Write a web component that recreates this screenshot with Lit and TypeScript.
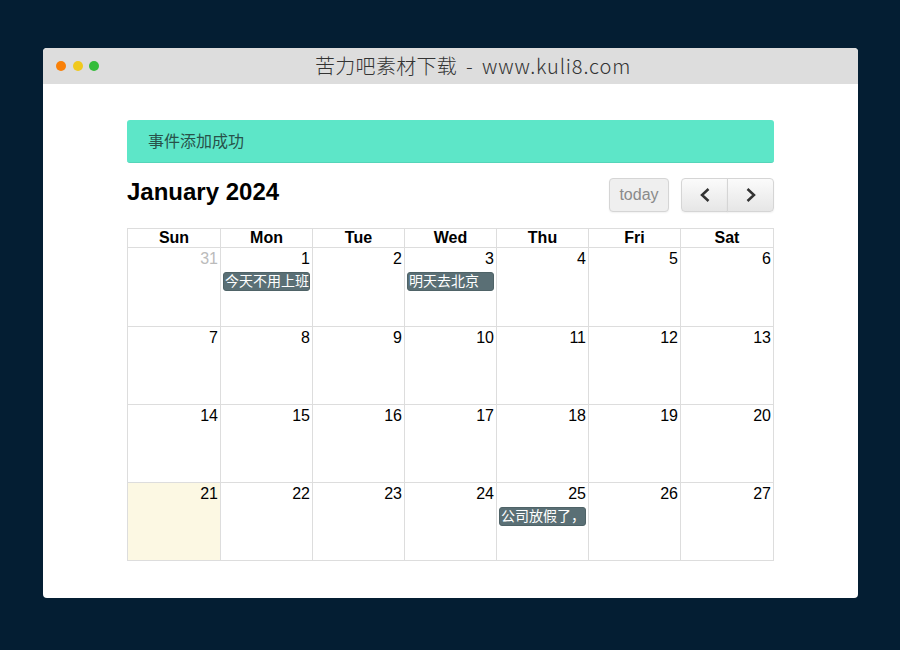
import { LitElement, html, css } from 'lit';
import { customElement } from 'lit/decorators.js';

type Day = { n: number; muted?: boolean; current?: boolean; event?: string };

const weekdays = ['Sun', 'Mon', 'Tue', 'Wed', 'Thu', 'Fri', 'Sat'];
const colWidths = [93, 92, 92, 92, 92, 92, 93];

const weeks: Day[][] = [
  [{ n: 31, muted: true }, { n: 1, event: '今天不用上班' }, { n: 2 }, { n: 3, event: '明天去北京' }, { n: 4 }, { n: 5 }, { n: 6 }],
  [{ n: 7 }, { n: 8 }, { n: 9 }, { n: 10 }, { n: 11 }, { n: 12 }, { n: 13 }],
  [{ n: 14 }, { n: 15 }, { n: 16 }, { n: 17 }, { n: 18 }, { n: 19 }, { n: 20 }],
  [{ n: 21, current: true }, { n: 22 }, { n: 23 }, { n: 24 }, { n: 25, event: '公司放假了，大家好好休息' }, { n: 26 }, { n: 27 }],
];

@customElement('app-root')
export class AppRoot extends LitElement {
  static styles = css`
    :host {
      display: block;
      height: 650px;
      box-sizing: border-box;
      padding: 48px 42px 52px 43px;
      background: #041e33;
      font-family: "Liberation Sans", "Noto Sans CJK SC", sans-serif;
    }
    .window {
      height: 550px;
      background: #fff;
      border-radius: 4px;
      overflow: hidden;
    }
    .titlebar {
      position: relative;
      box-sizing: border-box;
      display: flex;
      align-items: center;
      height: 36px;
      padding: 0 0 1px 272px;
      background: #dddddd;
    }
    .dots {
      position: absolute;
      left: 13px;
      top: 13px;
      display: flex;
      gap: 6.5px;
    }
    .dot {
      width: 10px;
      height: 10px;
      border-radius: 50%;
    }
    .orange { background: #f98008; }
    .yellow { background: #f0c91d; }
    .green { background: #34bc3a; }
    .site {
      display: flex;
      align-items: center;
      font-family: "Noto Sans CJK SC", sans-serif;
      font-weight: 300;
      font-size: 20px;
      line-height: 24px;
      color: #333;
    }
    .site-cn {
      letter-spacing: 0.3px;
    }
    .site-dash {
      width: 8px;
      margin-left: 9px;
    }
    .site-en {
      margin-left: 8px;
      letter-spacing: 0.85px;
    }
    .content {
      padding: 36px 84px 0;
    }
    .alert {
      box-sizing: border-box;
      height: 43px;
      padding-left: 21px;
      line-height: 44px;
      font-size: 16px;
      color: #28524a;
      background: #5de6c8;
      border-bottom: 1px solid #55d5b9;
      border-radius: 3px;
    }
    .toolbar {
      display: flex;
      align-items: flex-start;
      margin-top: 15px;
      height: 50px;
    }
    h2 {
      flex: 1;
      margin: 0;
      font-size: 24px;
      line-height: 28px;
      font-weight: bold;
      color: #000;
    }
    .btn {
      box-sizing: border-box;
      height: 34px;
      border: 1px solid #d5d5d5;
      border-radius: 4px;
      background: linear-gradient(#fbfbfb, #e6e6e6);
      box-shadow: 0 1px 2px rgba(0, 0, 0, 0.06);
      display: flex;
      align-items: center;
      justify-content: center;
    }
    .btn-today {
      width: 60px;
      margin-right: 12px;
      font-size: 16px;
      color: #8a8a8a;
      background: #efefef;
    }
    .group {
      display: flex;
    }
    .group .btn {
      width: 47px;
    }
    .group .btn:first-child {
      border-radius: 4px 0 0 4px;
    }
    .group .btn:last-child {
      margin-left: -1px;
      border-radius: 0 4px 4px 0;
    }
    .group svg {
      width: 12px;
      height: 14px;
      fill: none;
      stroke: #333;
      stroke-width: 2.5;
    }
    table {
      width: 647px;
      table-layout: fixed;
      border-collapse: collapse;
      color: #000;
    }
    th, td {
      border: 1px solid #ddd;
      padding: 0;
    }
    th {
      height: 18px;
      font-size: 16px;
      line-height: 18px;
    }
    td {
      height: 77px;
      vertical-align: top;
    }
    tbody tr:first-child td {
      height: 78px;
    }
    td.current {
      background: #fcf8e3;
    }
    .num {
      padding: 1px 2px 0 0;
      text-align: right;
      font-size: 16px;
      line-height: 20px;
    }
    .muted .num {
      color: #bbb;
    }
    .event {
      box-sizing: border-box;
      height: 19px;
      margin: 3px 2px 0 2px;
      padding: 0 1px;
      overflow: hidden;
      white-space: nowrap;
      font-size: 14px;
      line-height: 17px;
      color: #fff;
      background: #5a6f75;
      border: 1px solid #4f6367;
      border-radius: 3px;
    }
  `;

  renderDay(d: Day) {
    const cls = (d.muted ? 'muted ' : '') + (d.current ? 'current' : '');
    return html`<td class=${cls}>
      <div class="num">${d.n}</div>
      ${d.event ? html`<div class="event">${d.event}</div>` : ''}
    </td>`;
  }

  render() {
    return html`
      <div class="window">
        <div class="titlebar">
          <div class="dots">
            <span class="dot orange"></span>
            <span class="dot yellow"></span>
            <span class="dot green"></span>
          </div>
          <div class="site">
            <span class="site-cn">苦力吧素材下载</span>
            <span class="site-dash">-</span>
            <span class="site-en">www.kuli8.com</span>
          </div>
        </div>
        <div class="content">
          <div class="alert">事件添加成功</div>
          <div class="toolbar">
            <h2>January 2024</h2>
            <div class="btn btn-today">today</div>
            <div class="group">
              <div class="btn"><svg viewBox="0 0 12 14"><path d="M9.5 1 L3 7 L9.5 13"/></svg></div>
              <div class="btn"><svg viewBox="0 0 12 14"><path d="M2.5 1 L9 7 L2.5 13"/></svg></div>
            </div>
          </div>
          <table>
            <colgroup>${colWidths.map((w) => html`<col style="width:${w}px" />`)}</colgroup>
            <thead>
              <tr>${weekdays.map((w) => html`<th>${w}</th>`)}</tr>
            </thead>
            <tbody>
              ${weeks.map((week) => html`<tr>${week.map((d) => this.renderDay(d))}</tr>`)}
            </tbody>
          </table>
        </div>
      </div>
    `;
  }
}
